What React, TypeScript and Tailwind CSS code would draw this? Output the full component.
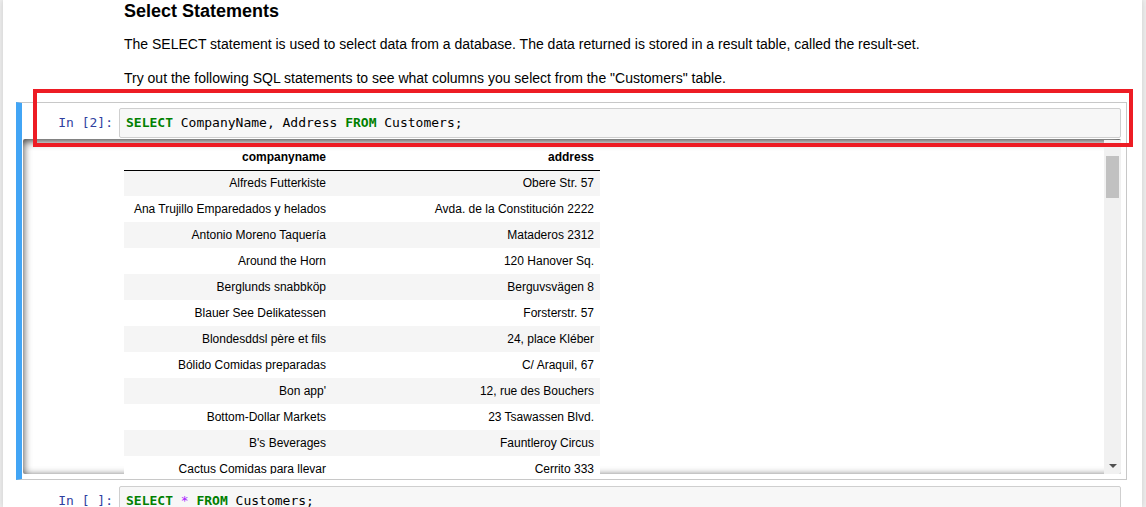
import React from "react";

const rows: [string, string][] = [
  ["Alfreds Futterkiste", "Obere Str. 57"],
  ["Ana Trujillo Emparedados y helados", "Avda. de la Constitución 2222"],
  ["Antonio Moreno Taquería", "Mataderos 2312"],
  ["Around the Horn", "120 Hanover Sq."],
  ["Berglunds snabbköp", "Berguvsvägen 8"],
  ["Blauer See Delikatessen", "Forsterstr. 57"],
  ["Blondesddsl père et fils", "24, place Kléber"],
  ["Bólido Comidas preparadas", "C/ Araquil, 67"],
  ["Bon app'", "12, rue des Bouchers"],
  ["Bottom-Dollar Markets", "23 Tsawassen Blvd."],
  ["B's Beverages", "Fauntleroy Circus"],
  ["Cactus Comidas para llevar", "Cerrito 333"],
  ["Centro comercial Moctezuma", "Sierras de Granada 9993"],
];

const mono = "font-['DejaVu_Sans_Mono',monospace] text-[13px]";

const Prompt = ({ n }: { n: string }) => (
  <div className={`w-[97px] shrink-0 pr-[6px] text-right text-[#303f9f] ${mono} leading-[30px] whitespace-pre`}>
    {`In [${n}]:`}
  </div>
);

const CodeBox = ({ children }: { children: React.ReactNode }) => (
  <div
    className={`w-[1002px] h-[30px] flex items-center pl-[6px] bg-[#f7f7f7] border border-[#cfcfcf] rounded-[2px] text-black ${mono}`}
  >
    <span className="whitespace-pre">{children}</span>
  </div>
);

const Kw = ({ children }: { children: React.ReactNode }) => (
  <span className="text-[#008000] font-bold">{children}</span>
);

const OutputTable = () => (
  <table className="w-[476px] border-collapse text-[12px] text-black table-fixed">
    <thead>
      <tr className="h-[26px] border-b border-black">
        <th className="w-[208px] text-right pr-[6px] font-bold align-middle">companyname</th>
        <th className="w-[268px] text-right pr-[6px] font-bold align-middle">address</th>
      </tr>
    </thead>
    <tbody>
      {rows.map(([name, addr], i) => (
        <tr key={name} className={i % 2 === 0 ? "h-[26px] bg-[#f5f5f5]" : "h-[26px] bg-white"}>
          <td className="text-right pr-[6px] whitespace-nowrap">{name}</td>
          <td className="text-right pr-[6px] whitespace-nowrap">{addr}</td>
        </tr>
      ))}
    </tbody>
  </table>
);

export default function App() {
  return (
    <div className="relative w-[1146px] h-[507px] overflow-hidden bg-[#eeeeee] font-['Liberation_Sans',Arial,sans-serif]">
      <div className="ml-[3px] w-[1139px] h-full bg-white shadow-[0_0_6px_rgba(0,0,0,0.15)]">
        {/* markdown cell */}
        <div className="pl-[121px] text-black">
          <h3 className="text-[18px] font-bold leading-[22px]">Select Statements</h3>
          <p className="mt-[12px] text-[14px] leading-[20px]">
            The SELECT statement is used to select data from a database. The data returned is stored in a result
            table, called the result-set.
          </p>
          <p className="mt-[14px] text-[14px] leading-[20px]">
            Try out the following SQL statements to see what columns you select from the "Customers" table.
          </p>
        </div>

        {/* selected code cell */}
        <div className="mt-[14px] ml-[13px] w-[1111px] border border-[#c8c8c8] border-l-[6px] border-l-[#42a5f5] pt-[5px] pb-[5px]">
          <div className="flex">
            <Prompt n="2" />
            <CodeBox>
              <Kw>SELECT</Kw> CompanyName, Address <Kw>FROM</Kw> Customers;
            </CodeBox>
          </div>
          <div className="mt-[1px] ml-[1px] w-[1098px] h-[335px] flex rounded-[2px] overflow-hidden shadow-[inset_0_2px_8px_rgba(0,0,0,0.8)]">
            <div className="flex-1 overflow-hidden pl-[101px] pt-[5px]">
              <OutputTable />
            </div>
            <div className="w-[17px] shrink-0 bg-[#f1f1f1] flex flex-col mt-[1px]">
              <div className="h-[16px]" />
              <div className="mx-[2px] h-[42px] bg-[#c1c1c1]" />
              <div className="flex-1" />
              <div className="h-[16px] flex items-center justify-center">
                <div className="w-0 h-0 border-l-[4px] border-r-[4px] border-t-[4px] border-l-transparent border-r-transparent border-t-[#505050]" />
              </div>
            </div>
          </div>
        </div>

        {/* next code cell */}
        <div className="ml-[13px] pl-[6px] pt-[6px]">
          <div className="flex">
            <Prompt n=" " />
            <CodeBox>
              <Kw>SELECT</Kw> <span className="text-[#aa22ff]">*</span> <Kw>FROM</Kw> Customers;
            </CodeBox>
          </div>
        </div>
      </div>

      {/* red annotation box */}
      <div className="absolute left-[33px] top-[89px] w-[1100px] h-[58px] border-[4px] border-[#ed1c24]" />
    </div>
  );
}
